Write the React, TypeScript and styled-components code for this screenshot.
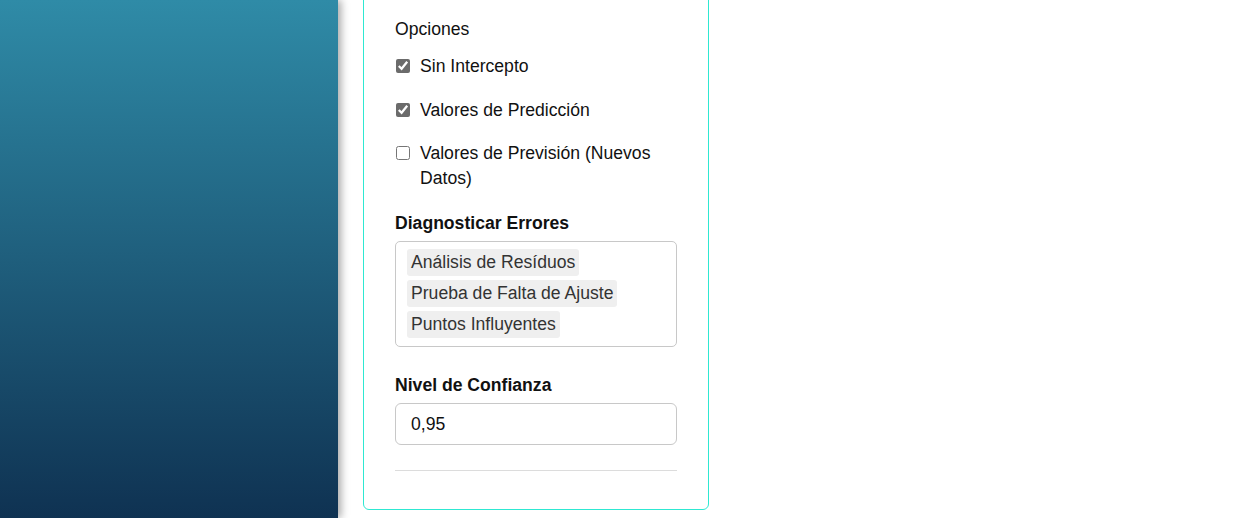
import React from "react";
import styled, { createGlobalStyle } from "styled-components";

const GlobalStyle = createGlobalStyle`
  html, body { margin: 0; padding: 0; background: #fff; }
  body { font-family: "Liberation Sans", Arial, sans-serif; }
  * { box-sizing: border-box; }
`;

const Layout = styled.div`
  display: flex;
  height: 100vh;
  overflow: hidden;
`;

const Sidebar = styled.aside`
  width: 338px;
  flex-shrink: 0;
  height: 100%;
  background: linear-gradient(180deg, #2f8ba7 0%, #0f3252 100%);
  box-shadow: 3px 0 8px rgba(0, 0, 0, 0.35);
  position: relative;
  z-index: 1;
`;

const Main = styled.main`
  flex: 1;
  display: flex;
  flex-direction: column;
  justify-content: flex-end;
  padding: 0 0 8px 25px;
  overflow: hidden;
`;

const Card = styled.section`
  width: 346px;
  flex-shrink: 0;
  border: 1px solid #2ee8d2;
  border-radius: 6px;
  padding: 32px 31px 38px 31px;
  display: flex;
  flex-direction: column;
  font-size: 17.6px;
  line-height: 25px;
  color: #111;
`;

const Caption = styled.div`
  margin-bottom: 12px;
`;

const OptionList = styled.div`
  display: flex;
  flex-direction: column;
  gap: 18.5px;
`;

const OptionRow = styled.label`
  display: flex;
  align-items: flex-start;
  gap: 10px;
`;

const Check = styled.input.attrs({ type: "checkbox" })`
  width: 14px;
  height: 14px;
  margin: 5px 0 0 1px;
  flex-shrink: 0;
  accent-color: #6b6b6b;
`;

const FieldLabel = styled.div<{ $top: number }>`
  font-weight: bold;
  margin-top: ${(p) => p.$top}px;
  margin-bottom: 5px;
`;

const ListBox = styled.div`
  border: 1px solid #c8c8c8;
  border-radius: 5px;
  padding: 7px 11px 8px 11px;
  display: flex;
  flex-direction: column;
  align-items: flex-start;
  gap: 4px;
`;

const Chip = styled.span`
  background: #efefef;
  color: #333;
  border-radius: 3px;
  padding: 1px 4px;
  line-height: 25px;
`;

const TextInput = styled.input`
  width: 100%;
  height: 42px;
  border: 1px solid #c8c8c8;
  border-radius: 6px;
  padding: 0 15px;
  font-family: "Liberation Sans", Arial, sans-serif;
  font-size: 17.6px;
  color: #111;
  background: #fff;
  outline: none;
`;

const Divider = styled.hr`
  border: none;
  border-top: 1px solid #dcdcdc;
  margin: 25px 0 0 0;
  width: 100%;
`;

export default function App() {
  return (
    <>
      <GlobalStyle />
      <Layout>
        <Sidebar />
        <Main>
          <Card>
            <Caption>Opciones</Caption>
            <OptionList>
              <OptionRow>
                <Check defaultChecked />
                <span>Sin Intercepto</span>
              </OptionRow>
              <OptionRow>
                <Check defaultChecked />
                <span>Valores de Predicción</span>
              </OptionRow>
              <OptionRow>
                <Check />
                <span>Valores de Previsión (Nuevos Datos)</span>
              </OptionRow>
            </OptionList>
            <FieldLabel $top={20}>Diagnosticar Errores</FieldLabel>
            <ListBox>
              <Chip>Análisis de Resíduos</Chip>
              <Chip>Prueba de Falta de Ajuste</Chip>
              <Chip>Puntos Influyentes</Chip>
            </ListBox>
            <FieldLabel $top={26}>Nivel de Confianza</FieldLabel>
            <TextInput defaultValue="0,95" />
            <Divider />
          </Card>
        </Main>
      </Layout>
    </>
  );
}
